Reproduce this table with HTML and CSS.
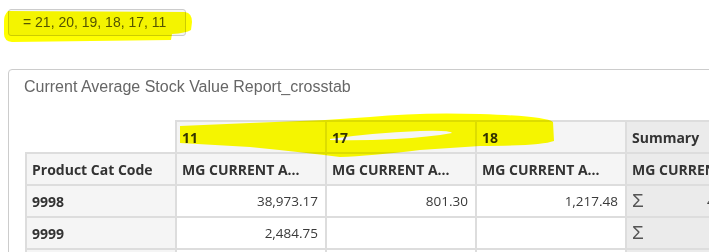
FILE: index.html
```html
<!DOCTYPE html>
<html>
<head>
<meta charset="utf-8">
<link rel="stylesheet" href="styles.css">
</head>
<body>
<div class="page">
  <div class="filter">= 21, 20, 19, 18, 17, 11</div>
  <div class="panel">
    <div class="panel-title">Current Average Stock Value Report_crosstab</div>
    <table class="crosstab">
      <colgroup>
        <col class="c-row"><col class="c-data"><col class="c-data"><col class="c-data"><col class="c-sum">
      </colgroup>
      <tr class="r1">
        <td class="corner"></td>
        <th class="hd">11</th>
        <th class="hd">17</th>
        <th class="hd">18</th>
        <th class="hd sum">Summary</th>
      </tr>
      <tr>
        <th class="rh">Product Cat Code</th>
        <th class="hd">MG CURRENT A...</th>
        <th class="hd">MG CURRENT A...</th>
        <th class="hd">MG CURRENT A...</th>
        <th class="hd sum">MG CURRENT A...</th>
      </tr>
      <tr>
        <th class="rh">9998</th>
        <td class="num">38,973.17</td>
        <td class="num">801.30</td>
        <td class="num">1,217.48</td>
        <td class="sumv"><div class="sumbox"><span class="sigma">Σ</span><span class="sumnum">40,991.95</span></div></td>
      </tr>
      <tr>
        <th class="rh">9999</th>
        <td class="num">2,484.75</td>
        <td class="num"></td>
        <td class="num"></td>
        <td class="sumv"><div class="sumbox"><span class="sigma">Σ</span><span class="sumnum">2,484.75</span></div></td>
      </tr>
      <tr>
        <th class="rh"></th>
        <td class="num"></td>
        <td class="num"></td>
        <td class="num"></td>
        <td class="sumv"></td>
      </tr>
    </table>
  </div>
  <svg class="marker" width="709" height="252" viewBox="0 0 709 252">
    <path d="M8,11 L185,12 Q192,13 192,22 L191,30 Q186,33 172,34 L171,40 L12,42 Q4,41 4,34 L4,21 Q4,15 8,11 Z"/>
    <path fill-rule="evenodd" d="M180,126 L250,123 L325,120 L370,117 Q420,112 480,114 Q545,116 553,122 L554,141 Q540,146 480,146 L420,150 Q370,156 340,157 Q300,152 250,147 L180,143 Z M330,139 Q370,133 420,131 Q450,130 452,133 Q430,137 395,139 Q360,141 330,140 Z"/>
  </svg>
</div>
</body>
</html>
```
FILE: styles.css
```css
html, body {
  margin: 0;
  padding: 0;
  background: #fff;
  overflow: hidden;
}
.page {
  position: relative;
  width: 709px;
  height: 252px;
  overflow: hidden;
  padding-top: 9px;
  box-sizing: border-box;
}
.filter {
  margin-left: 8px;
  width: 178px;
  height: 27px;
  box-sizing: border-box;
  border: 1px solid #cccccc;
  border-radius: 3px;
  background: #f4f4f4;
  font-family: "Liberation Sans", Arial, sans-serif;
  font-size: 14px;
  line-height: 25px;
  color: #555;
  padding-left: 14px;
  white-space: nowrap;
}
.panel {
  margin-top: 33px;
  margin-left: 8px;
  width: 900px;
  height: 300px;
  border: 1px solid #cccccc;
  border-radius: 4px;
  padding: 7px 0 0 16px;
  box-sizing: border-box;
}
.panel-title {
  font-family: "Liberation Sans", Arial, sans-serif;
  font-size: 16px;
  line-height: 20px;
  color: #666;
  margin-left: -1px;
  white-space: nowrap;
}
.crosstab {
  margin-top: 23px;
  border-collapse: collapse;
  table-layout: fixed;
  font-family: "Open Sans", sans-serif;
  font-size: 14px;
  color: #333;
}
.c-row, .c-data { width: 150px; }
.c-sum { width: 150px; }
.crosstab tr { height: 32px; }
.crosstab th, .crosstab td {
  border: 2px solid #dddddd;
  padding: 0 7px 0 5px;
  white-space: nowrap;
  overflow: hidden;
  box-sizing: border-box;
}
.crosstab .corner {
  border-top: none;
  border-left: none;
  background: transparent;
}
.hd, .rh {
  background: #f5f5f5;
  font-weight: 700;
  text-align: left;
}
.num {
  background: #fff;
  text-align: right;
  font-weight: 400;
  font-size: 13.5px;
  color: #3a3a3a;
}
.crosstab .sum {
  background: #ebebeb;
}
.sumv {
  background: #ebebeb;
}
.sumbox {
  display: flex;
  justify-content: space-between;
  align-items: center;
  font-size: 13.5px;
  color: #3a3a3a;
}
.sigma {
  font-family: "Liberation Sans", Arial, sans-serif;
  font-size: 19px;
  font-weight: 400;
  color: #555;
  line-height: 20px;
}
.marker {
  position: absolute;
  left: 0;
  top: 0;
  pointer-events: none;
  mix-blend-mode: multiply;
}
.marker path {
  fill: #ffff00;
}
```
